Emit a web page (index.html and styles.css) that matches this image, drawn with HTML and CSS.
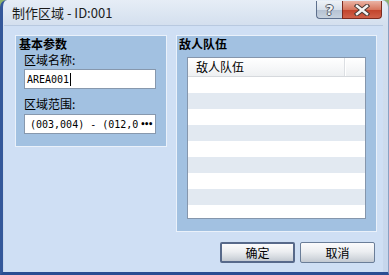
FILE: index.html
```html
<!DOCTYPE html>
<html lang="zh-CN">
<head>
    <meta charset="UTF-8">
    <title>制作区域 - ID:001</title>
    <link rel="stylesheet" href="styles.css">
</head>
<body>

<div class="window">
    <div class="titlebar">
        <span class="title">制作区域 - ID:001</span>
        <div class="caption-buttons">
            <button class="cap-btn help"><span>?</span></button>
            <button class="cap-btn close">
                <svg width="18" height="12" viewBox="0 0 18 12">
                    <path d="M4 2 L14 10 M14 2 L4 10" stroke="#4a3a36" stroke-width="4.5" stroke-linecap="square"/>
                    <path d="M4 2 L14 10 M14 2 L4 10" stroke="#f4f4f4" stroke-width="2.4" stroke-linecap="square"/>
                </svg>
            </button>
        </div>
    </div>

    <div class="client">
        <div class="panels">
            <div class="group basic">
                <div class="group-title">基本参数</div>
                <label class="field-label" for="areaName">区域名称:</label>
                <div class="textbox" id="areaName">
                    <span class="value">AREA001</span><span class="caret"></span>
                </div>
                <label class="field-label second" for="areaRange">区域范围:</label>
                <div class="textbox picker" id="areaRange">
                    <span class="value">(003,004) - (012,0</span>
                    <span class="more">•••</span>
                </div>
            </div>

            <div class="group enemy">
                <div class="group-title">敌人队伍</div>
                <div class="listview">
                    <div class="list-header">
                        <div class="col-head">敌人队伍</div>
                        <div class="col-rest"></div>
                    </div>
                    <div class="list-body">
                        <div class="row"></div>
                        <div class="row"></div>
                        <div class="row"></div>
                        <div class="row"></div>
                        <div class="row"></div>
                        <div class="row"></div>
                        <div class="row"></div>
                        <div class="row"></div>
                        <div class="row"></div>
                    </div>
                </div>
            </div>
        </div>

        <div class="actions">
            <button class="btn default">确定</button>
            <button class="btn">取消</button>
        </div>
    </div>
</div>

</body>
</html>
```

FILE: styles.css
```css
body {
    margin: 0;
    background: #8fb46a;
    font-family: "Noto Sans CJK SC", "Noto Sans", sans-serif;
    font-size: 12px;
    color: #000;
}
.window {
    width: 389px;
    height: 275px;
    box-sizing: border-box;
    display: flex;
    flex-direction: column;
    border-radius: 7px 7px 0 0;
    background: linear-gradient(#e6edf6, #d3dfee 26px, #c6d6ec);
    border-left: 3px solid #34589a;
    border-bottom: 3px solid #2a4d92;
    border-right: 1px solid #8aa0c2;
    overflow: hidden;
}
.titlebar {
    height: 25px;
    flex: none;
    display: flex;
    justify-content: space-between;
    align-items: flex-start;
    padding-left: 9px;
}
.title {
    font-size: 13px;
    line-height: 14px;
    margin-top: 6px;
    color: #1b1b1b;
}
.caption-buttons {
    display: flex;
    margin-right: 6px;
    margin-top: 1px;
}
.cap-btn {
    height: 18px;
    padding: 0;
    margin: 0;
    border: 1px solid #5d6f8c;
    border-top: none;
    display: flex;
    align-items: center;
    justify-content: center;
}
.help {
    width: 26px;
    border-radius: 0 0 0 4px;
    background: linear-gradient(#eef2f7, #d6dfea 50%, #b4c1d2 51%, #c7d2df);
    border-right: none;
}
.help span {
    font-family: "DejaVu Sans", sans-serif;
    font-weight: bold;
    font-size: 14px;
    line-height: 14px;
    color: #f2f2f2;
    text-shadow: 1px 0 #4e5665, -1px 0 #4e5665, 0 1px #4e5665, 0 -1px #4e5665;
}
.close {
    width: 40px;
    border-radius: 0 0 4px 0;
    border-color: #7c2a1e;
    background: linear-gradient(#eab3a4, #d7775f 50%, #c2422a 51%, #d0614a);
}
.client {
    flex: 1;
    margin: 0 5px 0 1px;
    padding: 9px 6px 0 11px;
    background: #cfdff4;
    border-top: 1px solid #b8c9e0;
    display: flex;
    flex-direction: column;
}
.panels {
    display: flex;
    align-items: flex-start;
    gap: 9px;
}
.group {
    background: #a2c1e1;
    border: 1px solid #eaf1fa;
    box-sizing: border-box;
    padding-top: 1px;
}
.group.basic {
    width: 152px;
    height: 112px;
    padding-left: 3px;
}
.group.enemy {
    width: 201px;
    height: 197px;
    padding-left: 2px;
}
.group-title {
    font-weight: bold;
    line-height: 14px;
    height: 14px;
}
.field-label {
    display: block;
    line-height: 14px;
    margin: 2px 0 0 5px;
}
.field-label.second {
    margin-top: 8px;
}
.textbox {
    width: 132px;
    height: 20px;
    box-sizing: border-box;
    margin: 2px 0 0 5px;
    background: #fff;
    border: 1px solid #8798ad;
    display: flex;
    align-items: center;
    padding-left: 2px;
    font-family: "DejaVu Sans Mono", "Noto Sans CJK SC", monospace;
    font-size: 10px;
    white-space: nowrap;
}
.textbox.picker {
    margin-top: 3px;
    padding-left: 5px;
}
.caret {
    width: 1px;
    height: 13px;
    background: #000;
    margin-left: 1px;
}
.more {
    font-size: 8px;
    font-weight: bold;
    letter-spacing: -1px;
    margin: 0 3px 0 auto;
}
.listview {
    margin: 6px 0 0 8px;
    width: 179px;
    height: 162px;
    box-sizing: border-box;
    border: 1px solid #8596ac;
    background: #fff;
    overflow: hidden;
}
.list-header {
    height: 18px;
    display: flex;
    background: linear-gradient(#fff, #f7f8f9 50%, #eef0f2);
    border-bottom: 1px solid #d6d9dd;
}
.col-head {
    width: 157px;
    padding-left: 8px;
    box-sizing: border-box;
    line-height: 18px;
    border-right: 1px solid #dcdfe3;
    box-shadow: 1px 0 #fff;
}
.col-rest {
    flex: 1;
}
.row {
    height: 16px;
}
.row:nth-child(even) {
    background: #e2e9f1;
}
.actions {
    display: flex;
    justify-content: flex-end;
    gap: 5px;
    margin: 10px 2px 0 0;
}
.btn {
    width: 75px;
    height: 21px;
    box-sizing: border-box;
    margin: 0;
    padding: 0;
    font-family: "Noto Sans CJK SC", "Noto Sans", sans-serif;
    font-size: 12px;
    color: #000;
    background: linear-gradient(#fbfbfc, #eceef1 45%, #d3d8de 80%, #c3c9d1);
    border: 1px solid #6a7d98;
    border-radius: 2px;
}
.btn.default {
    border: 2px solid #57698a;
}
```
